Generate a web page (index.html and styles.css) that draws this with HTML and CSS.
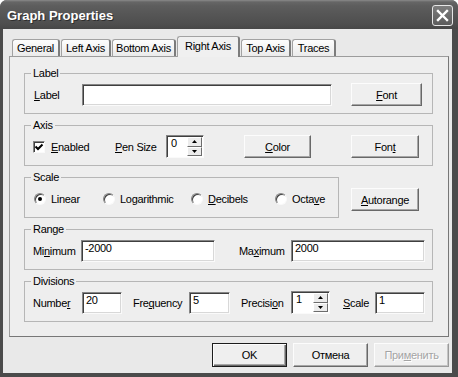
FILE: index.html
```html
<!DOCTYPE html>
<html>
<head>
<meta charset="utf-8">
<title>Graph Properties</title>
<link rel="stylesheet" href="styles.css">
</head>
<body>
<div class="window">
  <div class="titlebar">
    <span class="title">Graph Properties</span>
    <span class="close"><svg width="19" height="19" viewBox="0 0 19 19"><path d="M5 5 L14 14 M14 5 L5 14" stroke="#fff" stroke-width="2.4" stroke-linecap="square"/></svg></span>
  </div>
  <div class="client">
    <div class="tabs">
      <div class="tab w-general">General</div>
      <div class="tab w-left">Left Axis</div>
      <div class="tab w-bottom">Bottom Axis</div>
      <div class="tab tab-active w-right">Right Axis</div>
      <div class="tab w-top">Top Axis</div>
      <div class="tab w-traces">Traces</div>
    </div>
    <div class="panel">
      <div class="group g-wide">
        <div class="legend">Label</div>
        <div class="row">
          <span class="lbl l-label"><u>L</u>abel</span>
          <span class="input i-label"></span>
          <span class="btn b-font1"><u>F</u>ont</span>
        </div>
      </div>

      <div class="group g-wide">
        <div class="legend">Axis</div>
        <div class="row">
          <span class="check-item">
            <span class="checkbox"><svg width="10" height="10" viewBox="0 0 10 10"><path d="M1.5 4.5 L4 7 L8.5 2.5" fill="none" stroke="#000" stroke-width="2"/></svg></span>
            <span class="check-text"><u>E</u>nabled</span>
          </span>
          <span class="lbl l-pen"><u>P</u>en Size</span>
          <span class="spin s-pen">
            <span class="spin-val">0</span>
            <span class="spin-btns">
              <span class="spin-btn"><svg width="5" height="3" viewBox="0 0 5 3"><path d="M2.5 0 L5 3 L0 3 Z" fill="#000"/></svg></span>
              <span class="spin-btn"><svg width="5" height="3" viewBox="0 0 5 3"><path d="M0 0 L5 0 L2.5 3 Z" fill="#000"/></svg></span>
            </span>
          </span>
          <span class="btn b-color"><u>C</u>olor</span>
          <span class="btn b-font2">Fon<u>t</u></span>
        </div>
      </div>

      <div class="scale-line">
        <div class="group g-scale">
          <div class="legend">Scale</div>
          <div class="row">
            <span class="radio-item r-linear"><span class="radio on"></span><span class="radio-text">Linear</span></span>
            <span class="radio-item r-log"><span class="radio"></span><span class="radio-text">Logarithmic</span></span>
            <span class="radio-item r-dec"><span class="radio"></span><span class="radio-text"><u>D</u>ecibels</span></span>
            <span class="radio-item r-oct"><span class="radio"></span><span class="radio-text">Octa<u>v</u>e</span></span>
          </div>
        </div>
        <span class="btn b-auto"><u>A</u>utorange</span>
      </div>

      <div class="group g-wide">
        <div class="legend">Range</div>
        <div class="row">
          <span class="lbl l-min">Mi<u>n</u>imum</span>
          <span class="input i-range">-2000</span>
          <span class="lbl l-max">Ma<u>x</u>imum</span>
          <span class="input i-range">2000</span>
        </div>
      </div>

      <div class="group g-wide">
        <div class="legend">Divisions</div>
        <div class="row">
          <span class="lbl l-num">Numbe<u>r</u></span>
          <span class="input i-num">20</span>
          <span class="lbl l-freq">Fre<u>q</u>uency</span>
          <span class="input i-freq">5</span>
          <span class="lbl l-prec">Precisi<u>o</u>n</span>
          <span class="spin s-prec">
            <span class="spin-val">1</span>
            <span class="spin-btns">
              <span class="spin-btn"><svg width="5" height="3" viewBox="0 0 5 3"><path d="M2.5 0 L5 3 L0 3 Z" fill="#000"/></svg></span>
              <span class="spin-btn"><svg width="5" height="3" viewBox="0 0 5 3"><path d="M0 0 L5 0 L2.5 3 Z" fill="#000"/></svg></span>
            </span>
          </span>
          <span class="lbl l-scale"><u>S</u>cale</span>
          <span class="input i-scale">1</span>
        </div>
      </div>
    </div>
    <div class="buttons">
      <span class="btn dbtn default">OK</span>
      <span class="btn dbtn">Отмена</span>
      <span class="btn dbtn disabled">При<u>м</u>енить</span>
    </div>
  </div>
</div>
</body>
</html>
```
FILE: styles.css
```css
html, body {
  margin: 0;
  padding: 0;
  background: #ffffff;
}

body {
  font-family: "Liberation Sans", Arial, sans-serif;
  font-size: 11px;
  letter-spacing: -0.3px;
  color: #000;
}

u {
  text-decoration: underline;
  text-underline-offset: 1px;
}

.window {
  width: 458px;
  height: 377px;
  box-sizing: border-box;
  display: flex;
  flex-direction: column;
  background: #4b4b4b;
  border-radius: 7px 7px 0 0;
  overflow: hidden;
}

.titlebar {
  height: 29px;
  flex: none;
  display: flex;
  justify-content: space-between;
  align-items: flex-start;
  padding: 5px 5px 0 7px;
  box-sizing: border-box;
  background: linear-gradient(#8a8a8a 0, #666 2px, #5d5d5d 6px, #565656 14px, #4e4e4e 24px, #474747 29px);
}

.title {
  color: #fff;
  font-weight: bold;
  font-size: 13px;
  letter-spacing: 0;
  line-height: 21px;
  text-shadow: 1px 1px 0 #2e2e2e;
}

.close {
  width: 21px;
  height: 21px;
  box-sizing: border-box;
  border: 1px solid #e6e6e6;
  border-radius: 3px;
  background: linear-gradient(#7d7d7d, #5c5c5c);
  display: flex;
  align-items: center;
  justify-content: center;
}

.client {
  flex: 1;
  margin: 0 6px 4px 3px;
  background: #e9e9e9;
  display: flex;
  flex-direction: column;
}

/* Tabs */
.tabs {
  height: 21px;
  margin-top: 7px;
  padding-left: 9px;
  display: flex;
  align-items: flex-end;
  gap: 1px;
}

.tab {
  box-sizing: border-box;
  height: 17px;
  margin-bottom: 1px;
  border: 1px solid #a2a2a2;
  border-bottom: none;
  border-right: 2px solid #7c7c7c;
  border-radius: 3px 3px 0 0;
  background: linear-gradient(#fdfdfd, #ebebeb);
  display: flex;
  align-items: center;
  justify-content: center;
  white-space: nowrap;
}

.tab-active {
  position: relative;
  z-index: 1;
  height: 21px;
  margin-bottom: 0;
  padding-bottom: 2px;
  background: #f0f0f0;
  border-color: #a2a2a2;
  border-right: 2px solid #7c7c7c;
}

.w-general { width: 48px; }
.w-left { width: 50px; }
.w-bottom { width: 64px; }
.w-right { width: 63px; }
.w-top { width: 50px; }
.w-traces { width: 44px; }

/* Panel */
.panel {
  width: 440px;
  height: 281px;
  box-sizing: border-box;
  margin: -1px 0 0 6px;
  border: 1px solid #9c9c9c;
  border-right-color: #777;
  border-bottom-color: #777;
  background: #eeeeee;
  padding: 16px 0 0 14px;
  display: flex;
  flex-direction: column;
  gap: 11px;
}

.group {
  box-sizing: border-box;
  height: 41px;
  border: 1px solid #b6b6b6;
  display: flex;
  flex-direction: column;
  padding-bottom: 7px;
}

.g-wide { width: 409px; }
.g-scale { width: 315px; }

.legend {
  align-self: flex-start;
  height: 13px;
  line-height: 13px;
  margin: -7px 0 0 6px;
  padding: 0 2px;
  background: #eeeeee;
}

.row {
  display: flex;
  align-items: center;
  height: 23px;
  margin-top: 3px;
  white-space: nowrap;
}

.lbl {
  flex: none;
}

.l-label { margin-left: 9px; width: 48px; }
.l-pen { width: 51px; }
.l-min { margin-left: 8px; width: 48px; }
.l-max { margin-left: 24px; width: 52px; }
.l-num { margin-left: 8px; width: 49px; }
.l-freq { margin-left: 11px; width: 56px; }
.l-prec { margin-left: 11px; width: 50px; }
.l-scale { margin-left: 13px; width: 32px; }

/* Inputs */
.input {
  flex: none;
  box-sizing: border-box;
  height: 22px;
  background: #fff;
  border: 1px solid;
  border-color: #858585 #fafafa #fafafa #858585;
  box-shadow: inset 1px 1px 0 #3f3f3f, inset -1px -1px 0 #d8d8d8;
  padding: 1px 3px 0;
  line-height: 13px;
}

.i-label { width: 250px; }
.i-range { width: 134px; }
.i-num { width: 40px; }
.i-freq { width: 41px; }
.i-scale { width: 50px; }

/* Spinner */
.spin {
  flex: none;
  box-sizing: border-box;
  height: 23px;
  display: flex;
  background: #fff;
  border: 1px solid;
  border-color: #858585 #fafafa #fafafa #858585;
  box-shadow: inset 1px 1px 0 #3f3f3f;
  padding: 1px 1px 1px 1px;
}

.s-pen { width: 38px; }
.s-prec { width: 39px; }

.spin-val {
  flex: 1;
  padding: 0 0 0 3px;
  line-height: 13px;
}

.spin-btns {
  width: 15px;
  display: flex;
  flex-direction: column;
}

.spin-btn {
  flex: 1;
  box-sizing: border-box;
  background: #ececec;
  border: 1px solid;
  border-color: #fff #6c6c6c #6c6c6c #fff;
  display: flex;
  align-items: center;
  justify-content: center;
}

/* Checkbox */
.check-item {
  flex: none;
  width: 82px;
  margin-left: 8px;
  display: flex;
  align-items: center;
}

.checkbox {
  box-sizing: border-box;
  width: 12px;
  height: 12px;
  background: #fff;
  border: 1px solid;
  border-color: #858585 #fafafa #fafafa #858585;
  box-shadow: inset 1px 1px 0 #3f3f3f;
  display: flex;
  align-items: center;
  justify-content: center;
}

.check-text { margin-left: 6px; }

/* Radios */
.radio-item {
  flex: none;
  display: flex;
  align-items: center;
}

.r-linear { margin-left: 9px; width: 69px; }
.r-log { width: 88px; }
.r-dec { width: 84px; }
.r-oct { width: 60px; }

.radio {
  box-sizing: border-box;
  width: 12px;
  height: 12px;
  border-radius: 50%;
  background: #fff;
  border: 1px solid;
  border-color: #858585 #fafafa #fafafa #858585;
  box-shadow: inset 1px 1px 0 #3f3f3f;
  display: flex;
  align-items: center;
  justify-content: center;
}

.radio.on::after {
  content: "";
  width: 4px;
  height: 4px;
  border-radius: 50%;
  background: #000;
}

.radio-text { margin-left: 5px; }

.scale-line {
  display: flex;
  align-items: flex-start;
}

/* Buttons */
.btn {
  flex: none;
  box-sizing: border-box;
  height: 23px;
  border: 1px solid;
  border-color: #fcfcfc #686868 #686868 #fcfcfc;
  box-shadow: inset -1px -1px 0 #a6a6a6;
  background: #efefef;
  display: flex;
  align-items: center;
  justify-content: center;
  white-space: nowrap;
}

.b-font1 { margin-left: 19px; width: 71px; }
.b-color { margin-left: 40px; width: 67px; }
.b-font2 { margin-left: 40px; width: 68px; }
.b-auto { margin: 11px 0 0 12px; width: 68px; }

.buttons {
  display: flex;
  justify-content: flex-end;
  gap: 6px;
  margin-top: 6px;
  padding-right: 3px;
}

.dbtn {
  width: 75px;
  height: 24px;
}

.default {
  border: 1px solid #1c1c1c;
  box-shadow: inset 1px 1px 0 #fcfcfc, inset -1px -1px 0 #686868, inset -2px -2px 0 #a6a6a6;
}

.disabled {
  color: #a4a4a4;
  text-shadow: 1px 1px 0 #fff;
  border-color: #fcfcfc #9a9a9a #9a9a9a #fcfcfc;
  box-shadow: inset -1px -1px 0 #c4c4c4;
}
```
